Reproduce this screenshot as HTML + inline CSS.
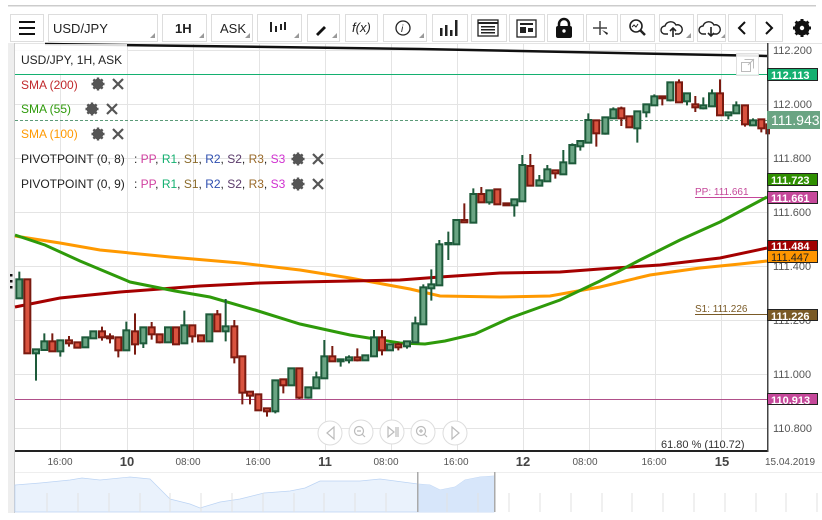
<!DOCTYPE html>
<html><head><meta charset="utf-8"><style>
body{margin:0;width:822px;height:520px;overflow:hidden;background:#fff;font-family:"Liberation Sans",sans-serif}
svg{position:absolute;left:0;top:0}
text{font-family:"Liberation Sans",sans-serif}
</style></head><body>
<svg width="822" height="520" viewBox="0 0 822 520">
<!-- top line -->
<rect x="8" y="5" width="808" height="1.5" fill="#ccc"/>
<!-- toolbar buttons -->
<g fill="#fff" stroke="#ddd">
<rect x="10.5" y="14.5" width="33" height="27"/>
<rect x="48.5" y="14.5" width="109" height="27"/>
<rect x="162.5" y="14.5" width="44" height="27"/>
<rect x="211.5" y="14.5" width="41" height="27"/>
<rect x="257.5" y="14.5" width="44" height="27"/>
<rect x="307.5" y="14.5" width="32" height="27"/>
<rect x="345.5" y="14.5" width="32" height="27"/>
<rect x="383.5" y="14.5" width="43" height="27"/>
<rect x="432.5" y="14.5" width="35" height="27"/>
<rect x="471.5" y="14.5" width="35" height="27"/>
<rect x="509.5" y="14.5" width="35" height="27"/>
<rect x="547.5" y="14.5" width="36" height="27"/>
<rect x="586.5" y="14.5" width="31" height="27"/>
<rect x="620.5" y="14.5" width="34" height="27"/>
<rect x="659.5" y="14.5" width="34" height="27"/>
<rect x="697.5" y="14.5" width="28" height="27"/>
<rect x="728.5" y="14.5" width="27" height="27"/>
<rect x="755.5" y="14.5" width="27" height="27"/>
</g>
<g fill="#999"><path d="M155 38l-5 0 5-5z"/><path d="M204 38l-5 0 5-5z"/><path d="M250 38l-5 0 5-5z"/><path d="M299 38l-5 0 5-5z"/><path d="M337 38l-5 0 5-5z"/><path d="M424 38l-5 0 5-5z"/><path d="M691 38l-5 0 5-5z"/><path d="M725 38l-4 0 4-4z"/></g>
<g fill="#111"><rect x="19" y="21" width="16" height="2"/><rect x="19" y="27" width="16" height="2"/><rect x="19" y="33" width="16" height="2"/></g>
<text x="53" y="33" font-size="13" fill="#222">USD/JPY</text>
<text x="175" y="33" font-size="13" fill="#222" font-weight="bold">1H</text>
<text x="220" y="33" font-size="13" fill="#222">ASK</text>
<g stroke="#222" stroke-width="2"><path d="M271 22v10M276 26v6M281 24v6M285 22v8"/></g>
<path d="M316 34l8-8 2 2-8 8z" fill="#111"/>
<text x="352" y="32" font-size="13" font-style="italic" fill="#222" font-family="Liberation Serif">f(x)</text>
<circle cx="403" cy="28" r="7" fill="none" stroke="#222" stroke-width="1.3"/><text x="401" y="32" font-size="10" font-style="italic" font-family="Liberation Serif" fill="#222">i</text>
<g fill="#222"><rect x="440" y="28" width="2.5" height="8"/><rect x="445" y="25" width="2.5" height="11"/><rect x="450" y="30" width="2.5" height="6"/><rect x="455" y="20" width="2.5" height="16"/></g>
<rect x="478" y="20" width="20" height="16" fill="none" stroke="#222" stroke-width="1.3"/><path d="M478 23h20" stroke="#222" stroke-width="2"/><g fill="#222"><rect x="481" y="26" width="14" height="1.5"/><rect x="481" y="29" width="14" height="1.5"/><rect x="481" y="32" width="14" height="1.5"/></g>
<rect x="517" y="20" width="19" height="17" fill="none" stroke="#222" stroke-width="1.3"/><rect x="520" y="23" width="13" height="2" fill="#222"/><rect x="520" y="27" width="6" height="6" fill="#222"/><rect x="528" y="28" width="5" height="4" fill="#222"/>
<path d="M559 27v-3a5 5 0 0 1 10 0v3" fill="none" stroke="#111" stroke-width="2.5"/><rect x="556" y="26" width="16" height="12" rx="2" fill="#111"/><circle cx="564" cy="31" r="1.7" fill="#fff"/>
<path d="M600 21v14M593 28h14" stroke="#444" stroke-width="1.5"/><path d="M602 30l5 5 1-2z" fill="#222"/>
<circle cx="636" cy="26" r="6" fill="none" stroke="#222" stroke-width="1.6"/><path d="M640 30l5 5" stroke="#222" stroke-width="2.5"/><path d="M632 27l2-2 2 2 2-3" fill="none" stroke="#222" stroke-width="1"/>
<path d="M668 34h-3a4 4 0 0 1 0-8 6 6 0 0 1 11-1 4 4 0 0 1 3 9h-4" fill="none" stroke="#222" stroke-width="1.4"/><path d="M673 37v-9M670 31l3-3 3 3" fill="none" stroke="#222" stroke-width="1.6"/>
<path d="M706 34h-3a4 4 0 0 1 0-8 6 6 0 0 1 11-1 4 4 0 0 1 3 9h-4" fill="none" stroke="#222" stroke-width="1.4"/><path d="M711 27v9M708 33l3 3 3-3" fill="none" stroke="#222" stroke-width="1.6"/>
<path d="M745 22l-6 6 6 6M766 22l6 6-6 6" fill="none" stroke="#111" stroke-width="2"/>
<g transform="translate(802,28)"><circle r="5.5" fill="none" stroke="#111" stroke-width="4"/><g stroke="#111" stroke-width="3"><path d="M0-9v18M-9 0h18M-6.4-6.4l12.8 12.8M6.4-6.4l-12.8 12.8"/></g><circle r="2.2" fill="#fff"/></g>

<!-- chart frame -->
<rect x="8" y="43" width="7" height="470" fill="#eee"/>
<rect x="14" y="43" width="1" height="470" fill="#ccc"/>
<!-- grid -->
<g stroke="#e4e4e4" stroke-width="1">
<path d="M15 50.5H768M15 104.5H768M15 158.5H768M15 212.5H768M15 266.5H768M15 320.5H768M15 374.5H768M15 428.5H768"/>
<path d="M60.5 44V451M127.5 44V451M193.5 44V451M259.5 44V451M325.5 44V451M391.5 44V451M457.5 44V451M523.5 44V451M589.5 44V451M655.5 44V451M721.5 44V451"/>
</g>
<rect x="15" y="43" width="807" height="1" fill="#e4e4e4"/>
<!-- horizontal level lines -->
<path d="M15 74.5H768" stroke="#14b070" stroke-width="1"/>
<path d="M15 120.5H768" stroke="#5b9a78" stroke-width="1" stroke-dasharray="3,2"/>
<path d="M695 197.5H768" stroke="#c5489a"/>
<path d="M695 314.5H768" stroke="#7a5a26"/>
<path d="M15 399.5H768" stroke="#b0508a"/>
<text x="695" y="195" font-size="10" fill="#c5489a">PP: 111.661</text>
<text x="695" y="312" font-size="10" fill="#7a5a26">S1: 111.226</text>
<!-- black trendline -->
<path d="M45 44 L420 49 L767 56" stroke="#111" stroke-width="2.5" fill="none"/>
<!-- MAs -->
<path d="M15 236 L60 243 L100 250 L170 257 L240 263 L300 270 L350 278 L410 289 L440 296 L500 297 L550 296 L600 287 L650 275 L700 268 L740 264 L767 261" stroke="#ff9900" stroke-width="3" fill="none"/>
<path d="M15 307 L60 298 L120 292 L200 286 L260 283 L300 282 L400 280 L440 277 L500 273 L560 272 L600 269 L660 265 L720 258 L767 248" stroke="#a50000" stroke-width="3" fill="none"/>
<path d="M15 235 L45 245 L80 261 L130 282 L175 291 L210 297 L255 310 L300 324 L350 335 L400 343 L425 344 L445 341 L475 334 L510 318 L560 300 L600 281 L640 260 L680 240 L720 222 L767 197" stroke="#2e9a0a" stroke-width="3" fill="none"/>
<!-- candles set 1 (zoom coords) -->
<g transform="translate(0,220) scale(0.33333)" stroke="#1d5a3a" stroke-width="6">
<g stroke="#1d5a3a">
<path d="M58 155V178M108 400V482M133 340V364M181 394V410M256 352V382M280 334V355M379 305V331M430 370V384M504 322V367M553 272V316M628 283V364M677 237V364M826 574V580M874 445V496M925 533V536M949 455V472M973 360V409M1022 424V440M1047 406V430M1096 406V421M1122 330V409M1170 391V393M1221 379V386M1246 290V310M1270 193V202M1294 148V242M1318 60V73"/>
</g>
<g fill="#6aa483">
<rect x="49" y="178" width="18" height="57"/><rect x="99" y="388" width="18" height="12"/><rect x="124" y="364" width="18" height="26"/><rect x="172" y="361" width="18" height="33"/><rect x="247" y="352" width="18" height="30"/><rect x="271" y="334" width="18" height="21"/><rect x="370" y="331" width="18" height="60"/><rect x="421" y="322" width="18" height="48"/><rect x="495" y="322" width="18" height="45"/><rect x="544" y="316" width="18" height="54"/><rect x="619" y="283" width="18" height="81"/><rect x="668" y="319" width="18" height="15"/><rect x="817" y="481" width="18" height="93"/><rect x="865" y="445" width="18" height="51"/><rect x="916" y="502" width="18" height="31"/><rect x="940" y="472" width="18" height="33"/><rect x="964" y="409" width="18" height="66"/><rect x="1013" y="418" width="18" height="6"/><rect x="1038" y="412" width="18" height="9"/><rect x="1087" y="406" width="18" height="15"/><rect x="1113" y="352" width="18" height="57"/><rect x="1161" y="373" width="18" height="18"/><rect x="1212" y="364" width="18" height="15"/><rect x="1237" y="310" width="18" height="57"/><rect x="1261" y="202" width="18" height="111"/><rect x="1285" y="193" width="18" height="12"/><rect x="1309" y="73" width="18" height="123"/>
</g>
<g stroke="#7a1a10">
<path d="M157 340V364M207 348V380M306 320V362M330 340V370M355 391V412M405 280V404M455 306V359M479 367V370M577 349V368M652 270V334M703 300V430M727 518V553M750 527V553M801 563V590M850 496V520M898 533V537M997 378V409M1072 385V424M1146 330V406M1195 368V391"/>
</g>
<g fill="#d9533f" stroke="#7a1a10">
<rect x="73" y="178" width="18" height="222"/><rect x="148" y="364" width="18" height="30"/><rect x="198" y="361" width="18" height="9"/><rect x="223" y="367" width="18" height="16"/><rect x="297" y="334" width="18" height="18"/><rect x="321" y="349" width="18" height="6"/><rect x="346" y="352" width="18" height="39"/><rect x="396" y="334" width="18" height="39"/><rect x="446" y="322" width="18" height="21"/><rect x="470" y="343" width="18" height="24"/><rect x="519" y="322" width="18" height="51"/><rect x="568" y="316" width="18" height="33"/><rect x="594" y="346" width="18" height="18"/><rect x="643" y="283" width="18" height="51"/><rect x="694" y="319" width="18" height="93"/><rect x="718" y="409" width="18" height="109"/><rect x="741" y="515" width="18" height="12"/><rect x="766" y="523" width="18" height="48"/><rect x="792" y="565" width="18" height="9"/><rect x="841" y="478" width="18" height="18"/><rect x="889" y="445" width="18" height="88"/><rect x="988" y="409" width="18" height="15"/><rect x="1063" y="412" width="18" height="9"/><rect x="1137" y="352" width="18" height="39"/><rect x="1186" y="373" width="18" height="9"/>
</g>
</g>
<!-- candles set 2 (zoom6 coords) -->
<g transform="translate(420,140) scale(0.33333)" stroke-width="6">
<g stroke="#1d5a3a"><path d="M85 275V360M160 145V162M208 187V194M283 196V230M307 45V75M358 105V121M382 75V88M430 30V67M457 10V15M481 19V32"/></g>
<g fill="#6aa483" stroke="#1d5a3a"><rect x="76" y="309" width="18" height="4"/><rect x="100" y="240" width="18" height="73"/><rect x="151" y="162" width="18" height="86"/><rect x="199" y="151" width="18" height="36"/><rect x="274" y="178" width="18" height="18"/><rect x="298" y="75" width="18" height="109"/><rect x="349" y="121" width="18" height="16"/><rect x="373" y="88" width="18" height="36"/><rect x="421" y="67" width="18" height="36"/><rect x="448" y="15" width="18" height="55"/><rect x="472" y="3" width="18" height="16"/></g>
<g stroke="#7a1a10"><path d="M133 190V240M184 141V162M331 42V78M406 100V116"/></g>
<g fill="#d9533f" stroke="#7a1a10"><rect x="124" y="240" width="18" height="7"/><rect x="175" y="162" width="18" height="25"/><rect x="223" y="148" width="18" height="45"/><rect x="250" y="190" width="18" height="6"/><rect x="322" y="78" width="18" height="59"/><rect x="397" y="91" width="18" height="9"/></g>
</g>
<!-- candles set 3 (zoom2 coords) -->
<g transform="translate(420,0) scale(0.33333)" stroke-width="6">
<g stroke="#1d5a3a"><path d="M505 340V360M556 401V404M580 322V328M652 385V428M679 337V352M703 283V289M751 301V304M801 304V316M850 292V328M876 268V280M925 346V358M949 304V316M999 355V361"/></g>
<g fill="#6aa483" stroke="#1d5a3a"><rect x="496" y="360" width="18" height="68"/><rect x="547" y="352" width="18" height="49"/><rect x="571" y="328" width="18" height="27"/><rect x="643" y="334" width="18" height="51"/><rect x="670" y="313" width="18" height="24"/><rect x="694" y="289" width="18" height="27"/><rect x="742" y="247" width="18" height="54"/><rect x="792" y="280" width="18" height="24"/><rect x="841" y="316" width="18" height="9"/><rect x="867" y="280" width="18" height="39"/><rect x="916" y="337" width="18" height="9"/><rect x="940" y="316" width="18" height="24"/><rect x="990" y="361" width="18" height="15"/></g>
<g stroke="#7a1a10"><path d="M529 400V440M604 320V378M727 295V316M777 238V247M826 288V336M900 238V280M975 373V380M1024 385V397"/></g>
<g fill="#d9533f" stroke="#7a1a10"><rect x="520" y="361" width="18" height="39"/><rect x="595" y="325" width="18" height="30"/><rect x="619" y="349" width="18" height="33"/><rect x="718" y="289" width="18" height="6"/><rect x="768" y="247" width="18" height="60"/><rect x="817" y="313" width="18" height="9"/><rect x="891" y="280" width="18" height="66"/><rect x="966" y="316" width="18" height="57"/><rect x="1015" y="358" width="18" height="27"/><rect x="1039" y="373" width="8" height="27"/></g>
</g>
<!-- left handle dots -->
<g fill="#111"><rect x="10" y="274" width="2.5" height="2.5"/><rect x="10" y="280" width="2.5" height="2.5"/><rect x="10" y="286" width="2.5" height="2.5"/></g>
<!-- legend -->
<rect x="15" y="44" width="112" height="30" fill="#fff" opacity="0.85"/>
<g font-size="12">
<text x="21" y="64" fill="#222">USD/JPY, 1H, ASK</text>
<text x="21" y="89" fill="#c0282b">SMA (200)</text>
<text x="21" y="113" fill="#2e9a0a">SMA (55)</text>
<text x="21" y="138" fill="#ff9900">SMA (100)</text>
<text x="21" y="163" fill="#222">PIVOTPOINT (0, 8)</text>
<text x="21" y="188" fill="#222">PIVOTPOINT (0, 9)</text>
<text x="134" y="163" fill="#222">: <tspan fill="#d040a0">PP</tspan>, <tspan fill="#14b070">R1</tspan>, <tspan fill="#8a6a2a">S1</tspan>, <tspan fill="#3050b0">R2</tspan>, <tspan fill="#5a3a6a">S2</tspan>, <tspan fill="#9a6a2a">R3</tspan>, <tspan fill="#d030d0">S3</tspan></text>
<text x="134" y="188" fill="#222">: <tspan fill="#d040a0">PP</tspan>, <tspan fill="#14b070">R1</tspan>, <tspan fill="#8a6a2a">S1</tspan>, <tspan fill="#3050b0">R2</tspan>, <tspan fill="#5a3a6a">S2</tspan>, <tspan fill="#9a6a2a">R3</tspan>, <tspan fill="#d030d0">S3</tspan></text>
</g>
<defs><g id="gear"><circle r="3.8" fill="none" stroke="#555" stroke-width="3"/><g stroke="#555" stroke-width="2.4"><path d="M0-6.5v13M-6.5 0h13M-4.6-4.6l9.2 9.2M4.6-4.6l-9.2 9.2"/></g></g>
<g id="x"><path d="M-5-5l10 10M5-5l-10 10" stroke="#555" stroke-width="2.2"/></g></defs>
<use href="#gear" x="98" y="84"/><use href="#x" x="118" y="84"/>
<use href="#gear" x="92" y="109"/><use href="#x" x="112" y="109"/>
<use href="#gear" x="98" y="134"/><use href="#x" x="118" y="134"/>
<use href="#gear" x="298" y="159"/><use href="#x" x="318" y="159"/>
<use href="#gear" x="298" y="184"/><use href="#x" x="318" y="184"/>
<!-- expand icon -->
<rect x="736.5" y="53.5" width="22" height="22" fill="#fff" stroke="#ddd" opacity="0.9"/>
<rect x="741.5" y="62.5" width="9" height="9" fill="none" stroke="#bbb"/><path d="M744.5 59.5h9v9M748 65l6-6" fill="none" stroke="#bbb"/>
<!-- nav buttons -->
<g fill="#fff" stroke="#ddd"><circle cx="330" cy="433" r="12"/><circle cx="361" cy="432" r="12"/><circle cx="392" cy="432" r="12"/><circle cx="423" cy="432" r="12"/><circle cx="455" cy="433" r="12"/></g>
<g fill="none" stroke="#bbb" stroke-width="1.2"><path d="M334 427l-7 6 7 6z"/><circle cx="359" cy="431" r="4.5"/><path d="M362 434l3 3M357 431h4"/><path d="M388 427l6 5-6 5zM396 427v10M398 427v10"/><circle cx="421" cy="431" r="4.5"/><path d="M424 434l3 3M419 431h4M421 429v4"/><path d="M452 427l7 6-7 6z"/></g>
<text x="661" y="448" font-size="11" fill="#333">61.80 % (110.72)</text>
<!-- axes -->
<rect x="15" y="450" width="753" height="2" fill="#222"/>
<rect x="767" y="43" width="1.5" height="409" fill="#444"/>
<g font-size="11" fill="#555">
<text x="773" y="54">112.200</text><text x="773" y="108">112.000</text><text x="773" y="162">111.800</text><text x="773" y="216">111.600</text><text x="773" y="270">111.400</text><text x="773" y="324">111.200</text><text x="773" y="378">111.000</text><text x="773" y="432">110.800</text>
</g>
<!-- price tags -->
<g font-size="11" font-weight="bold" fill="#fff">
<rect x="767.5" y="68.5" width="50" height="12" fill="#14b070" stroke="#222"/><text x="771" y="79">112.113</text>
<rect x="767" y="111" width="53" height="18" fill="#6aa483"/><text x="771" y="125" font-size="14" font-weight="normal">111.943</text>
<rect x="767.5" y="173.5" width="50" height="12" fill="#2f8f00" stroke="#222"/><text x="771" y="184">111.723</text>
<rect x="767.5" y="191.5" width="50" height="12" fill="#c5489a" stroke="#222"/><text x="771" y="202">111.661</text>
<rect x="767.5" y="240.5" width="50" height="10" fill="#a00000" stroke="#222"/><text x="771" y="250">111.484</text>
<rect x="767.5" y="250.5" width="50" height="12" fill="#ff9500" stroke="#222"/><text x="771" y="261" fill="#222" font-weight="normal">111.447</text>
<rect x="767.5" y="309.5" width="50" height="11" fill="#7a5a26" stroke="#222"/><text x="771" y="320">111.226</text>
<rect x="767.5" y="393.5" width="50" height="11" fill="#c5489a" stroke="#222"/><text x="771" y="404">110.913</text>
</g>
<!-- x labels -->
<g font-size="10" fill="#555" text-anchor="middle">
<text x="60" y="465">16:00</text><text x="188" y="465">08:00</text><text x="258" y="465">16:00</text><text x="386" y="465">08:00</text><text x="456" y="465">16:00</text><text x="585" y="465">08:00</text><text x="654" y="465">16:00</text><text x="790" y="465">15.04.2019</text>
<text x="127" y="466" font-size="13" font-weight="bold" fill="#444">10</text><text x="325" y="466" font-size="13" font-weight="bold" fill="#444">11</text><text x="523" y="466" font-size="13" font-weight="bold" fill="#444">12</text><text x="722" y="466" font-size="13" font-weight="bold" fill="#444">15</text>
</g>
<rect x="15" y="472" width="807" height="1" fill="#eee"/>
<!-- navigator -->
<path d="M15 485 L40 483 L70 480 L82 478 L100 480 L130 477 L150 479 L155 484 L170 499 L190 504 L200 508 L220 502 L240 499 L264 493 L290 491 L305 488 L320 481 L360 481 L380 479 L418 484 L430 485 L440 490 L455 487 L465 480 L480 477 L494 476 L494 512 L15 512Z" fill="#eaf2fc" stroke="#bcd4f4" stroke-width="0.7"/>
<path d="M418 484 L430 485 L440 490 L455 487 L465 480 L480 477 L494 476 L494 512 L418 512Z" fill="#d7e6fa"/>
<rect x="417" y="472" width="1.5" height="40" fill="#aaa"/><rect x="494" y="472" width="1.5" height="40" fill="#aaa"/>
<g stroke="#e2e2e2"><path d="M47 493V512M78 493V512M109 493V512M140 493V512M170 493V512M201 493V512M232 493V512M263 493V512M294 493V512M324 493V512M355 493V512M386 493V512M447 493V512M478 493V512M509 493V512M540 493V512M571 493V512M602 493V512M632 493V512M663 493V512M694 493V512M725 493V512M756 493V512M786 493V512M817 493V512"/></g>
</svg>
</body></html>
